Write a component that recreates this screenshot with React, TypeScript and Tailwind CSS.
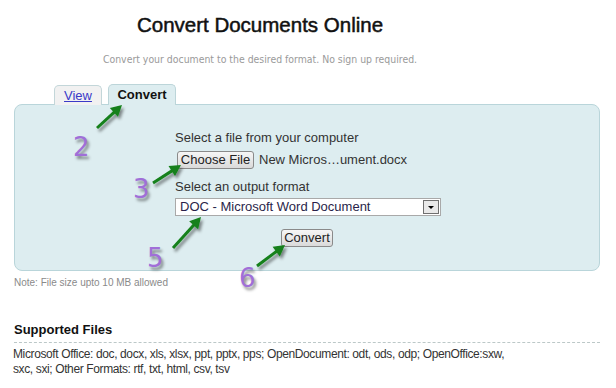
import React from 'react';

const arrows = [
  { x1: 97, y1: 128, x2: 122, y2: 105 },
  { x1: 153, y1: 183, x2: 181, y2: 165 },
  { x1: 173, y1: 248, x2: 201, y2: 217 },
  { x1: 257, y1: 266, x2: 285, y2: 245 },
];

const steps = [
  { n: '2', x: 73, y: 132 },
  { n: '3', x: 133, y: 174 },
  { n: '5', x: 147, y: 243 },
  { n: '6', x: 239, y: 263 },
];

function Arrow({ x1, y1, x2, y2 }: { x1: number; y1: number; x2: number; y2: number }) {
  const dx = x2 - x1;
  const dy = y2 - y1;
  const len = Math.sqrt(dx * dx + dy * dy);
  const ux = dx / len;
  const uy = dy / len;
  // head: 11px long, 6px half width
  const bx = x2 - ux * 11;
  const by = y2 - uy * 11;
  const px = -uy * 6;
  const py = ux * 6;
  const head = `${x2},${y2} ${bx + px},${by + py} ${bx - px},${by - py}`;
  return (
    <g filter="url(#shadow)">
      <line x1={x1} y1={y1} x2={bx + ux * 2} y2={by + uy * 2} stroke="#13801a" strokeWidth="3" />
      <polygon points={head} fill="#13801a" />
    </g>
  );
}

export default function App() {
  return (
    <div className="relative w-[616px] h-[388px] overflow-hidden bg-white font-['Liberation_Sans',Arial,sans-serif] text-[#333]">
      {/* Heading */}
      <div className="w-[520px] text-center">
        <h1 className="pt-[12px] text-[20.5px] leading-[26px] text-[#111] [-webkit-text-stroke:0.5px_#111]">
          Convert Documents Online
        </h1>
        <p className="mt-[14px] text-[10.4px] leading-[14px] text-[#9a9a9a] font-['DejaVu_Sans_Condensed','DejaVu_Sans',sans-serif]">
          Convert your document to the desired format. No sign up required.
        </p>
      </div>

      {/* Tabs */}
      <div className="mt-[18px] ml-[54px] flex items-end gap-[6px] h-[21px]">
        <div className="w-[48px] h-[20px] rounded-t-[5px] border border-b-0 border-[#c3d6d9] bg-[#f1f1f1] flex items-center justify-center text-[13px] text-[#3a3ac8] underline">
          View
        </div>
        <div className="relative z-10 w-[68px] h-[21px] rounded-t-[5px] border border-b-0 border-[#bcd5d9] bg-[#ddedf0] flex items-center justify-center text-[13px] font-bold text-[#111]">
          Convert
        </div>
      </div>

      {/* Panel */}
      <div className="-mt-px ml-[14px] w-[586px] h-[167px] rounded-[8px] border border-[#b9d5da] bg-[#ddedf0] pt-[25px] pl-[160px] text-[13px]">
        <div className="leading-[16px]">Select a file from your computer</div>
        <div className="mt-[5px] flex items-center h-[18px]">
          <div className="ml-[2px] w-[77px] h-[18px] rounded-[3px] border border-[#8a8a8a] bg-gradient-to-b from-[#f6f6f6] to-[#dadada] flex items-center justify-center text-[#222]">
            Choose File
          </div>
          <span className="ml-[5px] text-[#333]">New Micros…ument.docx</span>
        </div>
        <div className="mt-[10px] leading-[16px]">Select an output format</div>
        <div className="mt-[3px] w-[266px] h-[18px] border border-[#a9a9a9] bg-white flex items-center justify-between pl-[4px] pr-[1px]">
          <span className="text-[#2a1f4a]">DOC - Microsoft Word Document</span>
          <div className="w-[16px] h-[14px] border border-[#6f6f6f] bg-[#e9e9e9] flex items-center justify-center">
            <div className="w-0 h-0 border-l-[3px] border-r-[3px] border-t-[3px] border-l-transparent border-r-transparent border-t-black" />
          </div>
        </div>
        <div className="mt-[13px] ml-[106px] w-[52px] h-[18px] rounded-[3px] border border-[#8a8a8a] bg-gradient-to-b from-[#f6f6f6] to-[#dadada] flex items-center justify-center text-[#222]">
          Convert
        </div>
      </div>

      <p className="mt-[6px] ml-[14px] text-[10px] leading-[12px] text-[#8a8a8a]">Note: File size upto 10 MB allowed</p>

      {/* Supported files */}
      <div className="mt-[33px] mx-[14px] w-[586px]">
        <h2 className="text-[13px] leading-[16px] font-bold text-[#111]">Supported Files</h2>
        <div className="mt-[4px] border-t border-dashed border-[#bcc8c8]" />
        <p className="mt-[4px] -ml-px text-[12px] leading-[15px] text-[#333] tracking-[-0.38px]">
          Microsoft Office: doc, docx, xls, xlsx, ppt, pptx, pps; OpenDocument: odt, ods, odp; OpenOffice:sxw,
          <br />
          sxc, sxi; Other Formats: rtf, txt, html, csv, tsv
        </p>
      </div>

      {/* Annotations */}
      <svg className="pointer-events-none absolute inset-0" width="616" height="388">
        <defs>
          <filter id="shadow" x="-50%" y="-50%" width="200%" height="200%">
            <feDropShadow dx="2" dy="3" stdDeviation="1.5" floodColor="#000" floodOpacity="0.45" />
          </filter>
        </defs>
        {arrows.map((a, i) => (
          <Arrow key={i} {...a} />
        ))}
      </svg>
      {steps.map((s) => (
        <span
          key={s.n}
          className="pointer-events-none absolute text-[26px] leading-[30px] text-[#a06fd8] font-['DejaVu_Sans',sans-serif] [text-shadow:2px_3px_3px_rgba(0,0,0,0.45)]"
          style={{ left: s.x, top: s.y }}
        >
          {s.n}
        </span>
      ))}
    </div>
  );
}
